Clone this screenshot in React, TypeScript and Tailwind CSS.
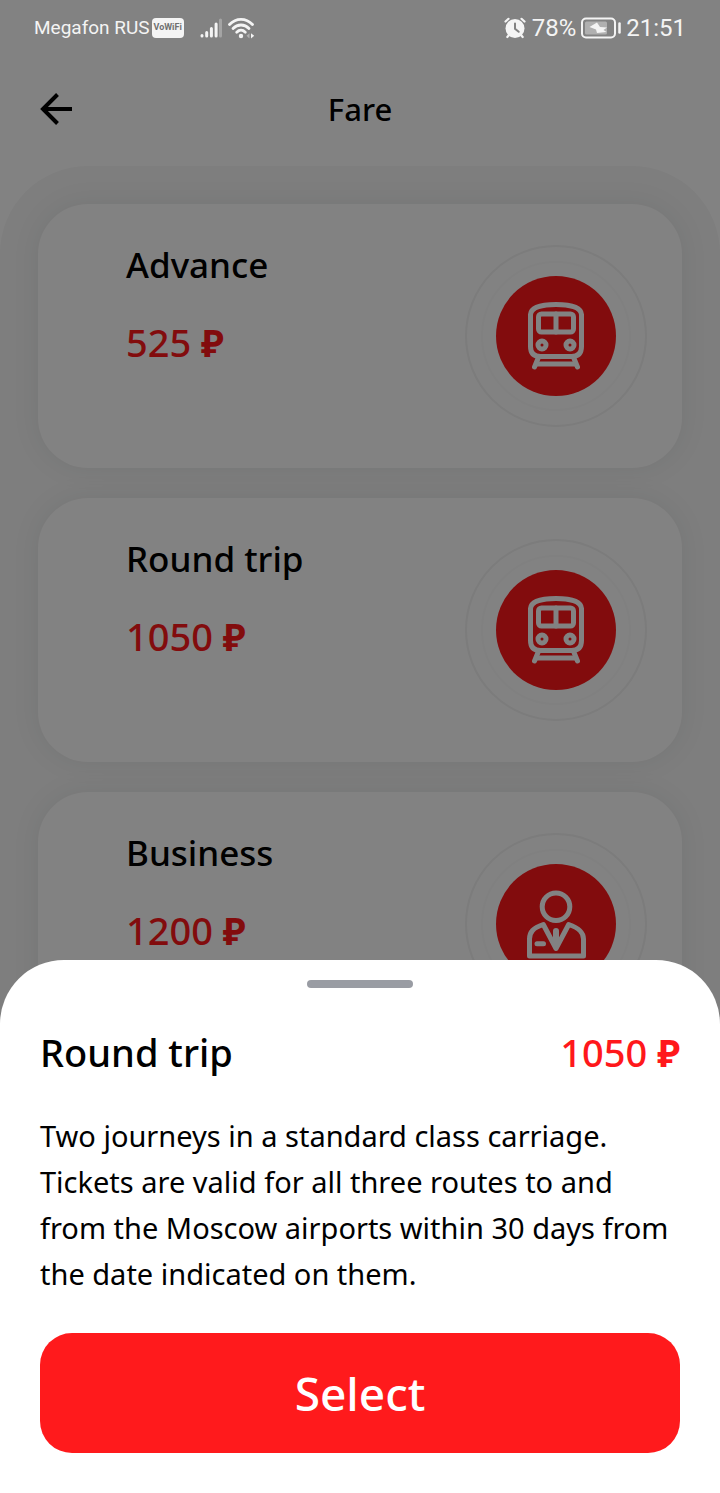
import { useState } from "react";

type IconName = "train" | "person";

interface Fare {
  id: string;
  name: string;
  price: number;
  icon: IconName;
  description: string;
}

const fares: Fare[] = [
  {
    id: "advance",
    name: "Advance",
    price: 525,
    icon: "train",
    description: "A single journey in a standard class carriage.",
  },
  {
    id: "round-trip",
    name: "Round trip",
    price: 1050,
    icon: "train",
    description:
      "Two journeys in a standard class carriage. Tickets are valid for all three routes to and from the Moscow airports within 30 days from the date indicated on them.",
  },
  {
    id: "business",
    name: "Business",
    price: 1200,
    icon: "person",
    description: "A single journey in a business class carriage.",
  },
];

function SignalIcon() {
  return (
    <svg viewBox="0 0 22 20" className="h-5 w-[22px]" aria-hidden="true">
      <g stroke="currentColor" strokeWidth="3" strokeLinecap="round">
        <path d="M2 17.5v.5M6.7 14.5V18M11.4 10.5V18M16.1 6V18" />
        <path d="M20.5 2V18" opacity="0.3" />
      </g>
    </svg>
  );
}

function WifiIcon() {
  return (
    <svg viewBox="0 0 27 22" className="h-[22px] w-[27px]" aria-hidden="true">
      <g fill="none" stroke="currentColor" strokeWidth="2.8" strokeLinecap="round">
        <path d="M1.5 7.5C8 .6 18 .6 24.5 7.5" />
        <path d="M5 11.5c4.5-4.700 11.5-4.700 16 0" />
        <path d="M8.7 15.2c2.6-2.6 6-2.6 8.6 0" />
      </g>
      <circle cx="13" cy="19" r="2.2" fill="currentColor" />
      <path d="M21.5 16.2v5.2l-3-2.6z" fill="currentColor" opacity="0.4" />
      <path d="M23 16.2v5.2l3.2-2.6z" fill="currentColor" />
    </svg>
  );
}

function AlarmIcon() {
  return (
    <svg viewBox="0 0 22 22" className="size-[22px]" aria-hidden="true">
      <g stroke="currentColor" strokeWidth="2.2" strokeLinecap="round">
        <path d="M1.5 4.5l3-2.7M20.5 4.5l-3-2.7M5 18l-1.7 2M17 18l1.7 2" />
      </g>
      <circle cx="11" cy="11.5" r="9.5" fill="currentColor" />
      <path
        d="M11 6.5v5.3l3.7 3"
        fill="none"
        stroke="#828282"
        strokeWidth="2"
        strokeLinecap="round"
      />
    </svg>
  );
}

function BatteryIcon() {
  return (
    <svg viewBox="0 0 42 22" className="h-[22px] w-[42px]" aria-hidden="true">
      <rect x="2" y="1.5" width="33" height="19" rx="4" fill="none" stroke="currentColor" strokeWidth="2" />
      <rect x="5" y="4.5" width="22" height="13" rx="1.5" fill="currentColor" opacity="0.4" />
      <path d="M17 5.500l-7.500 4.500 6.500 2.500 1 3.500 9.500-1-3-2 3.500-2.500-7-.5z" fill="currentColor" />
      <path d="M39.5 6.5v9" stroke="currentColor" strokeWidth="2.5" strokeLinecap="round" />
    </svg>
  );
}

function StatusBar() {
  return (
    <div className="relative z-20 flex h-14 items-center justify-between px-[34px] font-['Roboto',sans-serif] text-[#f4f4f4]">
      <div className="flex items-center">
        <span className="text-[19px]">Megafon RUS</span>
        <span className="ml-0.5 flex h-5 w-8 items-center justify-center rounded bg-[#f4f4f4] text-[9px] font-bold text-[#707070]">
          VoWiFi
        </span>
        <span className="ml-4">
          <SignalIcon />
        </span>
        <span className="ml-1.5">
          <WifiIcon />
        </span>
      </div>
      <div className="flex items-center text-[24px]">
        <AlarmIcon />
        <span className="ml-1.5">78%</span>
        <span className="ml-1">
          <BatteryIcon />
        </span>
        <span className="ml-1">21:51</span>
      </div>
    </div>
  );
}

function FareIcon({ name }: { name: IconName }) {
  return (
    <svg
      viewBox="0 0 120 120"
      className="size-[120px] rounded-full bg-[#ff181b] text-white"
      fill="none"
      stroke="currentColor"
      strokeWidth="5"
      strokeLinecap="round"
      strokeLinejoin="round"
      aria-hidden="true"
    >
      {name === "train" ? (
        <>
          <path d="M34.5 38.5C35 31 47 28.5 60 28.5S85 31 85.5 38.500V70.500Q85.500 80.500 75.500 80.500H44.500Q34.500 80.500 34.500 70.500Z" />
          <rect x="42.5" y="38" width="35" height="18" rx="3" />
          <path d="M60 38V56" />
          <circle cx="46" cy="69" r="4" />
          <circle cx="74" cy="69" r="4" />
          <path d="M42 82.5L38.5 91M78 82.5L81.5 91" />
          <path d="M41 88H79" />
        </>
      ) : (
        <>
          <circle cx="60" cy="42.7" r="13.8" />
          <path d="M47.3 60.5C37 64 33.5 68 33.5 75V92H87.5V75C87.5 68 83 64 72.7 60.5L60 84.5Z" />
          <path d="M60 67V80" strokeWidth="6" />
          <path d="M41 79.7H47.5" />
        </>
      )}
    </svg>
  );
}

function Price({ value }: { value: number }) {
  return (
    <>
      {value} <span className="font-bold">₽</span>
    </>
  );
}

function FareCard({ fare, onClick }: { fare: Fare; onClick: () => void }) {
  return (
    <button
      type="button"
      onClick={onClick}
      className="flex h-[264px] w-full shrink-0 items-center justify-between rounded-[50px] bg-white pr-[35px] pl-[88px] text-left shadow-[0_0_28px_rgba(30,50,50,0.08)]"
    >
      <span className="flex flex-col self-start pt-9">
        <span className="text-[35px] leading-[50px] font-medium text-black">{fare.name}</span>
        <span className="mt-6 text-[38px] leading-[56px] font-medium text-[#ff181b]">
          <Price value={fare.price} />
        </span>
      </span>
      <span className="flex size-[182px] items-center justify-center rounded-full border-2 border-[#f3f3f3]">
        <span className="flex size-[150px] items-center justify-center rounded-full border-2 border-[#fcfcfc]">
          <FareIcon name={fare.icon} />
        </span>
      </span>
    </button>
  );
}

function FareSheet({ fare, onSelect }: { fare: Fare; onSelect: () => void }) {
  return (
    <section
      role="dialog"
      aria-labelledby="fare-title"
      className="flex flex-col rounded-t-[64px] bg-white px-10 pt-5 pb-10"
      onClick={(e) => e.stopPropagation()}
    >
      <div className="h-2 w-[106px] self-center rounded-full bg-[#999ca3]" />
      <div className="mt-9 flex items-center justify-between text-[38px] leading-[56px] font-medium">
        <h2 id="fare-title">{fare.name}</h2>
        <p className="text-[#ff181b]">
          <Price value={fare.price} />
        </p>
      </div>
      <p className="mt-[33px] text-[29px] leading-[46px]">{fare.description}</p>
      <button
        type="button"
        onClick={onSelect}
        className="mt-9 h-[120px] rounded-[32px] bg-[#ff1a1c] text-[46px] font-medium text-white"
      >
        Select
      </button>
    </section>
  );
}

export default function App() {
  const [selected, setSelected] = useState<Fare | null>(fares[1]);

  const close = () => setSelected(null);

  return (
    <div className="relative flex h-screen flex-col overflow-hidden bg-white font-['Noto_Sans','Open_Sans',sans-serif] text-black">
      <StatusBar />

      {/* Header */}
      <header className="grid h-[110px] shrink-0 grid-cols-[1fr_auto_1fr] items-center px-10 pb-1">
        <button type="button" aria-label="Back" className="size-8">
          <svg viewBox="0 0 32 32" className="size-8" fill="none" stroke="currentColor" strokeWidth="4">
            <path d="M32 16H3M17.5 1.5L3 16L17.5 30.5" />
          </svg>
        </button>
        <h1 className="text-[31px] font-medium">Fare</h1>
      </header>

      {/* Fare list */}
      <main className="flex min-h-0 flex-1 flex-col gap-[30px] overflow-hidden rounded-t-[88px] bg-[#f7f7f7] px-[38px] pt-[38px]">
        {fares.map((fare) => (
          <FareCard key={fare.id} fare={fare} onClick={() => setSelected(fare)} />
        ))}
      </main>

      {/* Bottom sheet */}
      {selected && (
        <div
          className="absolute inset-0 z-10 flex flex-col justify-end bg-black/49"
          onClick={close}
        >
          <FareSheet fare={selected} onSelect={close} />
        </div>
      )}
    </div>
  );
}
